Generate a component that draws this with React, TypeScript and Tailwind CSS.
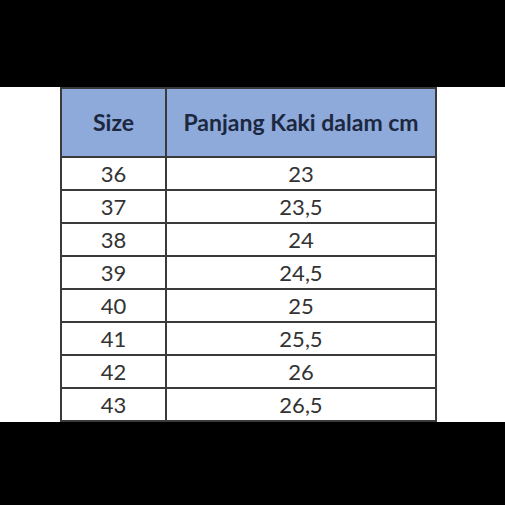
const rows: [string, string][] = [
  ["36", "23"],
  ["37", "23,5"],
  ["38", "24"],
  ["39", "24,5"],
  ["40", "25"],
  ["41", "25,5"],
  ["42", "26"],
  ["43", "26,5"],
];

export default function App() {
  return (
    <div className="w-[505px] h-[505px] bg-black flex flex-col" style={{ fontFamily: "Lato, 'Open Sans', sans-serif" }}>
      <div className="h-[87px] shrink-0" />
      <div className="h-[335px] shrink-0 bg-white pl-[60px]">
        <table className="border-collapse w-[377px] text-[22px] leading-none">
          <thead>
            <tr className="bg-[#8eaadb] h-[69px]">
              <th className="w-[105px] border-2 border-[#3a3a3a] font-bold text-[23px] text-[#1c2740] text-center">Size</th>
              <th className="border-2 border-[#3a3a3a] font-bold text-[23px] text-[#1c2740] text-center">Panjang Kaki dalam cm</th>
            </tr>
          </thead>
          <tbody>
            {rows.map(([s, p]) => (
              <tr key={s} className="h-[33px]">
                <td className="border-x-2 border-b-2 border-[#3a3a3a] text-center text-[#333]">{s}</td>
                <td className="border-x-2 border-b-2 border-[#3a3a3a] text-center text-[#333]">{p}</td>
              </tr>
            ))}
          </tbody>
        </table>
      </div>
      <div className="flex-1" />
    </div>
  );
}
